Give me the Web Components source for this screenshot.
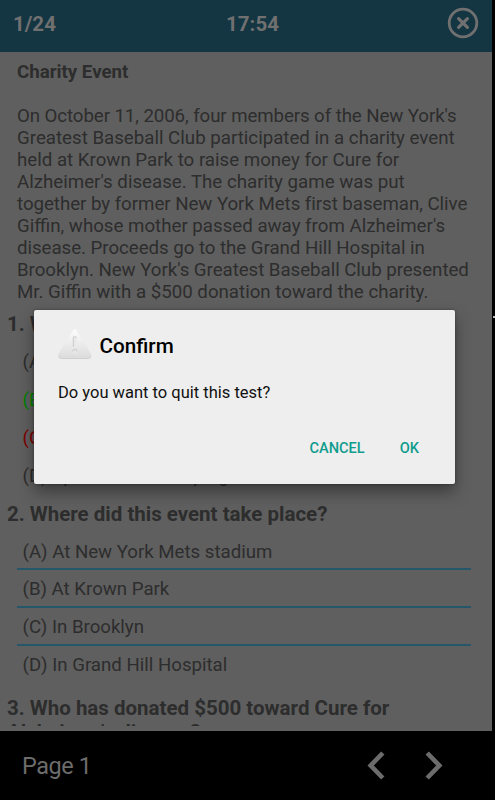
<!DOCTYPE html>
<html lang="en">
<head>
<meta charset="utf-8">
<title>Reading Test</title>
<style>
    body {
        margin: 0;
        background: #000;
        font-family: Roboto, "Liberation Sans", sans-serif;
        overflow: hidden;
    }
    .tight { letter-spacing: -.04px; }
    .tighter { letter-spacing: -.09px; }
</style>
</head>
<body>

<test-screen>
    <test-header slot="header" progress="1/24" time="17:54"></test-header>

    <reading-passage heading="Charity Event"><span class="tighter">On October 11, 2006, four members of the New York's</span><br>Greatest Baseball Club participated in a charity event<br>held at Krown Park to raise money for Cure for<br>Alzheimer's disease. The charity game was put<br><span class="tight">together by former New York Mets first baseman, Clive</span><br>Giffin, whose mother passed away from Alzheimer's<br><span class="tight">disease. Proceeds go to the Grand Hill Hospital in</span><br><span class="tight">Brooklyn. New York's Greatest Baseball Club presented</span><br>Mr. Giffin with a $500 donation toward the charity.</reading-passage>

    <test-question>
        <span slot="title">1. W</span>
        <answer-option plain>(A)</answer-option>
        <answer-option plain state="right">(B)</answer-option>
        <answer-option plain state="wrong">(C)</answer-option>
        <answer-option plain>(D) Sponsor the campaign</answer-option>
    </test-question>
    <test-question>
        <span slot="title">2. Where did this event take place?</span>
        <answer-option>(A) At New York Mets stadium</answer-option>
        <answer-option>(B) At Krown Park</answer-option>
        <answer-option>(C) In Brooklyn</answer-option>
        <answer-option plain>(D) In Grand Hill Hospital</answer-option>
    </test-question>
    <test-question style="margin-top: 5px">
        <span slot="title">3. Who has donated $500 toward Cure for<br>Alzheimer's disease?</span>
    </test-question>

    <page-nav slot="footer" label="Page 1"></page-nav>
    <confirm-dialog slot="dialog" heading="Confirm">Do you want to quit this test?</confirm-dialog>
</test-screen>

<script>
function makeTemplate(html) {
    const template = document.createElement('template');
    template.innerHTML = html;
    return template;
}

const screenTemplate = makeTemplate(`
    <style>
        :host {
            display: flex;
            width: 495px;
            height: 800px;
            position: relative;
            overflow: hidden;
        }
        .app {
            display: flex;
            flex-direction: column;
            width: 492px;
        }
        main {
            flex: 1;
            background: #5f5f5f;
            color: #2d2d2d;
            min-height: 0;
            padding-bottom: 5px;
            box-sizing: border-box;
        }
        .scroll {
            height: 100%;
            overflow: hidden;
        }
        .mark {
            width: 2px;
            height: 2px;
            margin: 316px 0 0 1px;
            background: #bbb;
        }
    </style>
    <div class="app">
        <slot name="header"></slot>
        <main><div class="scroll"><slot></slot></div></main>
        <slot name="footer"></slot>
    </div>
    <div class="mark"></div>
    <slot name="dialog"></slot>
`);

class TestScreen extends HTMLElement {
    constructor() {
        super();
        this.attachShadow({ mode: 'open' });
        this.shadowRoot.appendChild(screenTemplate.content.cloneNode(true));
    }
}

const headerTemplate = makeTemplate(`
    <style>
        :host {
            display: grid;
            grid-template-columns: 1fr auto 1fr;
            align-items: center;
            flex: none;
            height: 52px;
            padding: 0 13px;
            box-sizing: border-box;
            background: #143542;
            color: #707070;
            font-size: 20.5px;
            font-weight: 700;
            line-height: 24px;
        }
        .time {
            margin-left: 13px;
        }
        .progress, .time {
            padding-bottom: 4px;
        }
        svg {
            justify-self: end;
            margin-bottom: 6px;
        }
    </style>
    <span class="progress"></span>
    <span class="time"></span>
    <svg width="32" height="32" viewBox="0 0 32 32" fill="none" stroke="#707070">
        <circle cx="16" cy="16" r="13.8" stroke-width="2.8"/>
        <path d="M11.6 11.6l8.8 8.8M20.4 11.6l-8.8 8.8" stroke-width="3.2" stroke-linecap="round"/>
    </svg>
`);

class TestHeader extends HTMLElement {
    constructor() {
        super();
        this.attachShadow({ mode: 'open' });
        this.shadowRoot.appendChild(headerTemplate.content.cloneNode(true));
        this.shadowRoot.querySelector('.progress').textContent = this.getAttribute('progress');
        this.shadowRoot.querySelector('.time').textContent = this.getAttribute('time');
    }
}

const passageTemplate = makeTemplate(`
    <style>
        :host {
            display: block;
            padding: 9px 0 9px 17px;
            font-size: 18.7px;
            line-height: 22px;
            white-space: nowrap;
        }
        h1 {
            margin: 0 0 22px;
            font-size: inherit;
            font-weight: 700;
        }
    </style>
    <h1></h1>
    <div><slot></slot></div>
`);

class ReadingPassage extends HTMLElement {
    constructor() {
        super();
        this.attachShadow({ mode: 'open' });
        this.shadowRoot.appendChild(passageTemplate.content.cloneNode(true));
        this.shadowRoot.querySelector('h1').textContent = this.getAttribute('heading');
    }
}

const questionTemplate = makeTemplate(`
    <style>
        :host {
            display: block;
        }
        .title {
            padding: 0 0 7px 7px;
            font-size: 20.5px;
            font-weight: 700;
            line-height: 24px;
            white-space: nowrap;
        }
        .options {
            padding: 0 21px 7px 17px;
        }
    </style>
    <div class="title"><slot name="title"></slot></div>
    <div class="options"><slot></slot></div>
`);

class TestQuestion extends HTMLElement {
    constructor() {
        super();
        this.attachShadow({ mode: 'open' });
        this.shadowRoot.appendChild(questionTemplate.content.cloneNode(true));
    }
}

const optionTemplate = makeTemplate(`
    <style>
        :host {
            display: block;
            height: 37.9px;
            padding-left: 5.5px;
            box-sizing: border-box;
            border-bottom: 2px solid #25576a;
            font-size: 18.65px;
            line-height: 38px;
            white-space: nowrap;
        }
        :host([plain]) { border-bottom-color: transparent; }
        :host([state="right"]) { color: #008000; }
        :host([state="wrong"]) { color: #800000; }
    </style>
    <slot></slot>
`);

class AnswerOption extends HTMLElement {
    constructor() {
        super();
        this.attachShadow({ mode: 'open' });
        this.shadowRoot.appendChild(optionTemplate.content.cloneNode(true));
    }
}

const navTemplate = makeTemplate(`
    <style>
        :host {
            display: flex;
            align-items: center;
            flex: none;
            height: 69px;
            padding: 0 49px 0 22px;
            box-sizing: border-box;
            background: #000;
            color: #6c6c6c;
            font-size: 23.4px;
            letter-spacing: -.4px;
        }
        span {
            flex: 1;
            padding-top: 1px;
        }
        svg + svg { margin-left: 40px; }
    </style>
    <span></span>
    <svg width="18" height="29" viewBox="0 0 18 29" fill="none" stroke="#6c6c6c" stroke-width="4.6"><path d="M15.800 2L3.700 14.500L15.800 27"/></svg>
    <svg width="18" height="29" viewBox="0 0 18 29" fill="none" stroke="#6c6c6c" stroke-width="4.6"><path d="M2.200 2L14.300 14.500L2.200 27"/></svg>
`);

class PageNav extends HTMLElement {
    constructor() {
        super();
        this.attachShadow({ mode: 'open' });
        this.shadowRoot.appendChild(navTemplate.content.cloneNode(true));
        this.shadowRoot.querySelector('span').textContent = this.getAttribute('label');
    }
}

// Sits over the whole screen
const dialogTemplate = makeTemplate(`
    <style>
        :host {
            display: flex;
            flex-direction: column;
            position: absolute;
            left: 33.5px;
            top: 310px;
            width: 421.5px;
            height: 174px;
            padding: 18px 36px 26px 24.5px;
            box-sizing: border-box;
            border-radius: 2px;
            background: #eee;
            box-shadow: 0 8px 16px rgba(0, 0, 0, .38), 0 0 3px rgba(0, 0, 0, .35);
            color: #111;
        }
        header {
            display: flex;
            align-items: center;
            gap: 7.5px;
        }
        h2 {
            margin: 4px 0 0;
            font-size: 20.7px;
            font-weight: 500;
            line-height: 28px;
            color: #000;
        }
        p {
            margin: 23px 0 0;
            font-size: 16.5px;
            line-height: 20px;
        }
        .actions {
            display: flex;
            justify-content: flex-end;
            gap: 35px;
            margin-top: auto;
        }
        button {
            padding: 0;
            border: 0;
            background: none;
            color: #109c8d;
            font: 500 14.6px/20px Roboto, sans-serif;
        }
    </style>
    <header>
        <svg width="34" height="32" viewBox="0 0 34 32">
            <defs>
                <linearGradient id="face" x1="0" y1="0" x2="0" y2="1">
                    <stop offset="0" stop-color="#fcfcfc"/>
                    <stop offset="1" stop-color="#dcdcdc"/>
                </linearGradient>
            </defs>
            <path d="M14.800 3.300q2-2.600 4 0L32.800 26.500q1.300 3.900-2.200 4.200H3q-3.500-.3-2.200-4.200z" fill="#c6c6c6"/>
            <path d="M14.800 2.500q2-2.600 4 0L32.800 25.700q1.300 3.900-2.200 4.200H3q-3.500-.3-2.200-4.200z" fill="url(#face)"/>
            <path d="M15 9q1.800-1.800 3.600 0l-.3 10q-1.500 1.600-3 0z" fill="#e9e9e9"/>
            <path d="M15 9.600q1.800-2.400 3.600 0M15.200 9.600l.2 9.200" fill="none" stroke="#c8c8c8" stroke-width=".9"/>
            <circle cx="16.800" cy="23.600" r="2.300" fill="#e6e6e6"/>
            <path d="M14.600 23.500a2.200 2.200 0 0 1 4.400 0" fill="none" stroke="#c8c8c8" stroke-width=".9"/>
        </svg>
        <h2></h2>
    </header>
    <p><slot></slot></p>
    <div class="actions">
        <button id="cancel">CANCEL</button>
        <button id="ok">OK</button>
    </div>
`);

class ConfirmDialog extends HTMLElement {
    constructor() {
        super();
        this.attachShadow({ mode: 'open' });
        this.shadowRoot.appendChild(dialogTemplate.content.cloneNode(true));
        this.shadowRoot.querySelector('h2').textContent = this.getAttribute('heading');
        this.close = () => this.remove();
    }

    connectedCallback() {
        this.shadowRoot.querySelector('#cancel').addEventListener('click', this.close);
        this.shadowRoot.querySelector('#ok').addEventListener('click', this.close);
    }

    disconnectedCallback() {
        this.shadowRoot.querySelector('#cancel').removeEventListener('click', this.close);
        this.shadowRoot.querySelector('#ok').removeEventListener('click', this.close);
    }
}

window.customElements.define('test-screen', TestScreen);
window.customElements.define('test-header', TestHeader);
window.customElements.define('reading-passage', ReadingPassage);
window.customElements.define('test-question', TestQuestion);
window.customElements.define('answer-option', AnswerOption);
window.customElements.define('page-nav', PageNav);
window.customElements.define('confirm-dialog', ConfirmDialog);
</script>
</body>
</html>
